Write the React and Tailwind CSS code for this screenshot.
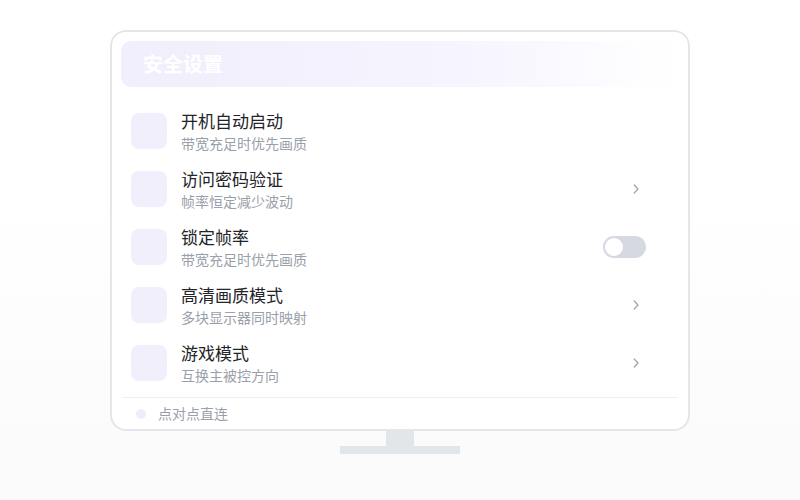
import React from "react";

const rows = [
  { title: "开机自动启动", sub: "带宽充足时优先画质", action: null },
  { title: "访问密码验证", sub: "帧率恒定减少波动", action: "chevron" },
  { title: "锁定帧率", sub: "带宽充足时优先画质", action: "toggle" },
  { title: "高清画质模式", sub: "多块显示器同时映射", action: "chevron" },
  { title: "游戏模式", sub: "互换主被控方向", action: "chevron" },
];

const Row = ({ title, sub, action }) => (
  <div className="flex items-center h-[58px] px-[10px] pr-[33px]">
    <div className="w-[36px] h-[36px] rounded-[8px] bg-[#f2effd] shrink-0" />
    <div className="ml-[14px] mt-[1px] flex flex-col flex-1">
      <span className="text-[17px] leading-[22px] text-[#222428]">{title}</span>
      <span className="text-[14px] leading-[22px] text-[#9aa0aa]">{sub}</span>
    </div>
    {action === "chevron" && (
      <svg width="8" height="12" viewBox="0 0 8 12" className="mr-[6px]">
        <path d="M2.2 2l3.8 4-3.8 4" fill="none" stroke="#9ca3af" strokeWidth="1.2" strokeLinecap="round" strokeLinejoin="round" />
      </svg>
    )}
    {action === "toggle" && (
      <div className="w-[43px] h-[22px] rounded-full bg-[#d6d9e0] p-[2px] flex items-center">
        <div className="w-[18px] h-[18px] rounded-full bg-white" />
      </div>
    )}
  </div>
);

const App = () => {
  return (
    <div
      className="w-[800px] h-[500px] bg-gradient-to-b from-white from-40% to-[#fafafb] flex flex-col items-center pt-[30px]"
      style={{ fontFamily: '"Noto Sans CJK SC", "Noto Sans", sans-serif' }}
    >
      <div className="w-[580px] h-[401px] border-2 border-[#e4e6ea] rounded-[16px] bg-white p-[9px] pb-0 flex flex-col">
        <div className="h-[46px] shrink-0 rounded-[10px] bg-gradient-to-r from-[#f1eefd] via-[#f6f4fe] via-60% to-white flex items-center px-[22px]">
          <span className="text-[20px] font-bold text-white">安全设置</span>
        </div>
        <div className="mt-[15px] flex flex-col shrink-0">
          {rows.map((r) => (
            <Row key={r.title} {...r} />
          ))}
        </div>
        <div className="mt-[5px] h-px shrink-0 bg-[#eeeff2] mx-[1px]" />
        <div className="flex items-center flex-1 px-[15px]">
          <div className="w-[10px] h-[10px] rounded-full bg-[#efecfd]" />
          <span className="ml-[12px] text-[14px] text-[#9aa0aa]">点对点直连</span>
        </div>
      </div>
      <div className="w-[28px] h-[15px] bg-[#e2e5e9]" />
      <div className="w-[120px] h-[8px] bg-[#e2e5e9]" />
    </div>
  );
};

export default App;
